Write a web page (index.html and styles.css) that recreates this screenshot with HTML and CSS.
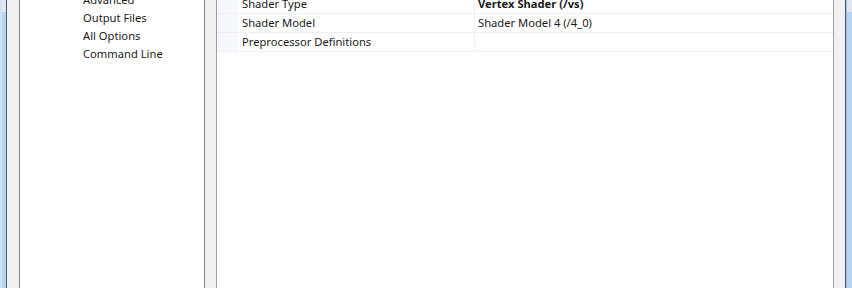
FILE: index.html
```html
<!DOCTYPE html>
<html>
<head>
<meta charset="utf-8">
<link rel="stylesheet" href="styles.css">
</head>
<body>
<div class="window">
  <div class="frame-left"></div>
  <div class="gap-left"></div>
  <div class="tree">
    <ul class="tree-list">
      <li>Advanced</li>
      <li>Output Files</li>
      <li>All Options</li>
      <li>Command Line</li>
    </ul>
  </div>
  <div class="gap-mid"></div>
  <div class="grid">
    <div class="rows">
      <div class="row">
        <div class="gutter"></div>
        <div class="name">Shader Type</div>
        <div class="value bold">Vertex Shader (/vs)</div>
      </div>
      <div class="row">
        <div class="gutter"></div>
        <div class="name">Shader Model</div>
        <div class="value">Shader Model 4 (/4_0)</div>
      </div>
      <div class="row">
        <div class="gutter"></div>
        <div class="name">Preprocessor Definitions</div>
        <div class="value"></div>
      </div>
    </div>
  </div>
  <div class="gap-right"></div>
  <div class="frame-right"></div>
</div>
</body>
</html>
```
FILE: styles.css
```css
html, body {
  margin: 0;
  padding: 0;
  height: 100%;
  overflow: hidden;
}
body {
  font-family: "Noto Sans", "DejaVu Sans", sans-serif;
  font-size: 11.2px;
  color: #1a1a1a;
  background: #f0f0f0;
}
.window {
  display: flex;
  height: 288px;
  width: 852px;
}
.frame-left {
  width: 6px;
  border-right: 1px solid #4b5766;
  background: linear-gradient(to bottom, #dfe6ef 0, #dfe6ef 12px, #b8d4f4 12px, #b8d4f4 100%);
  box-shadow: inset 2px 0 0 #cfe1f7;
}
.gap-left {
  width: 12px;
  background: #f0f0f0;
}
.tree {
  width: 184px;
  background: #ffffff;
  border-left: 1px solid #828790;
  border-right: 1px solid #828790;
  overflow: hidden;
}
.tree-list {
  list-style: none;
  margin: -9px 0 0 0;
  padding: 0 0 0 63px;
}
.tree-list li {
  height: 18px;
  line-height: 18px;
  white-space: nowrap;
}
.gap-mid {
  width: 11px;
  background: #f0f0f0;
}
.grid {
  width: 616px;
  background: #ffffff;
  border-left: 1px solid #a0a0a0;
  border-right: 1px solid #a0a0a0;
  overflow: hidden;
}
.rows {
  margin-top: -5px;
}
.row {
  display: flex;
  height: 18px;
  border-bottom: 1px solid #f0f0f2;
}
.gutter {
  width: 21px;
  background: #f4f7fc;
}
.name {
  width: 232px;
  padding-left: 4px;
  line-height: 18px;
  border-right: 1px solid #f0f0f2;
  white-space: nowrap;
}
.value {
  flex: 1;
  padding-left: 3px;
  line-height: 18px;
  white-space: nowrap;
}
.bold {
  font-weight: bold;
}
.gap-right {
  width: 11px;
  background: #f0f0f0;
  border-right: 1px solid #4b5766;
}
.frame-right {
  width: 6px;
  background: linear-gradient(to bottom, #dfe6ef 0, #dfe6ef 12px, #b8d4f4 12px, #b8d4f4 100%);
  box-shadow: inset 1px 0 0 #9ebfe6;
}
```
